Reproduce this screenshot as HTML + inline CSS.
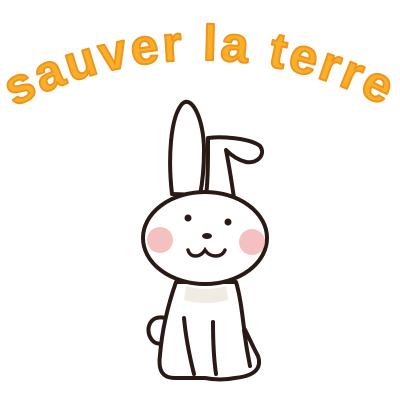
<!DOCTYPE html>
<html><head><meta charset="utf-8"><style>
html,body{margin:0;padding:0;background:#fff;width:400px;height:400px;overflow:hidden}
</style></head><body>
<svg width="400" height="400" viewBox="0 0 400 400" xmlns="http://www.w3.org/2000/svg">
<defs><path id="arc" d="M -20 128 A 390 390 0 0 1 420 128"/></defs>
<text font-family="Liberation Sans, sans-serif" font-weight="bold" font-size="50" fill="#f8b02c" stroke="#f0951a" stroke-width="2" stroke-linejoin="round" letter-spacing="3">
<textPath href="#arc" startOffset="50%" text-anchor="middle">sauver la terre</textPath></text>
<g fill="none" stroke="#2a1a16" stroke-width="4" stroke-linecap="round" stroke-linejoin="round">
<path d="M165 318 C150 314 144 330 152 340 C156 345 162 344 166 342" fill="#fff"/>
<path d="M176 282 C168 305 162 330 160 355 C158 370 162 378 175 378 L205 378 C215 380 225 380 235 378 C255 376 262 368 258 356 C252 345 248 335 244 328 C242 312 240 295 236 282 Z" fill="#fff"/>
<path d="M184 318 C186 340 190 358 194 374" />
<path d="M213 322 C213 342 214 360 216 374"/>
<path d="M244 330 C246 345 248 356 250 366"/>
<path d="M172 194 C168 160 170 118 182 104 C192 94 204 120 204 150 C204 170 202 185 200 195 Z" fill="#fff"/>
<path d="M206 196 C208 180 208 165 208 150 L208 138 C220 136 250 138 260 146 C266 154 258 164 246 162 C238 160 232 156 226 150 C230 170 232 185 234 198 Z" fill="#fff"/>
<ellipse cx="205" cy="238" rx="62" ry="46" fill="#fff"/>
</g>
<path d="M186 286 Q206 292 226 286 L228 300 Q206 306 184 300 Z" fill="#f1ebe3"/>
<circle cx="160" cy="240" r="13" fill="#f2b1b0" opacity="0.8"/>
<circle cx="252" cy="242" r="13" fill="#f2b1b0" opacity="0.8"/>
<g fill="#2a1a16"><ellipse cx="188" cy="218" rx="3.5" ry="3.5"/><ellipse cx="228" cy="222" rx="3.5" ry="3.5"/><ellipse cx="207" cy="236" rx="5" ry="3"/></g>
<path d="M188 250 C190 258 200 258 205 250 C210 258 222 258 225 250" fill="none" stroke="#2a1a16" stroke-width="3.5" stroke-linecap="round"/>
</svg>
</body></html>
